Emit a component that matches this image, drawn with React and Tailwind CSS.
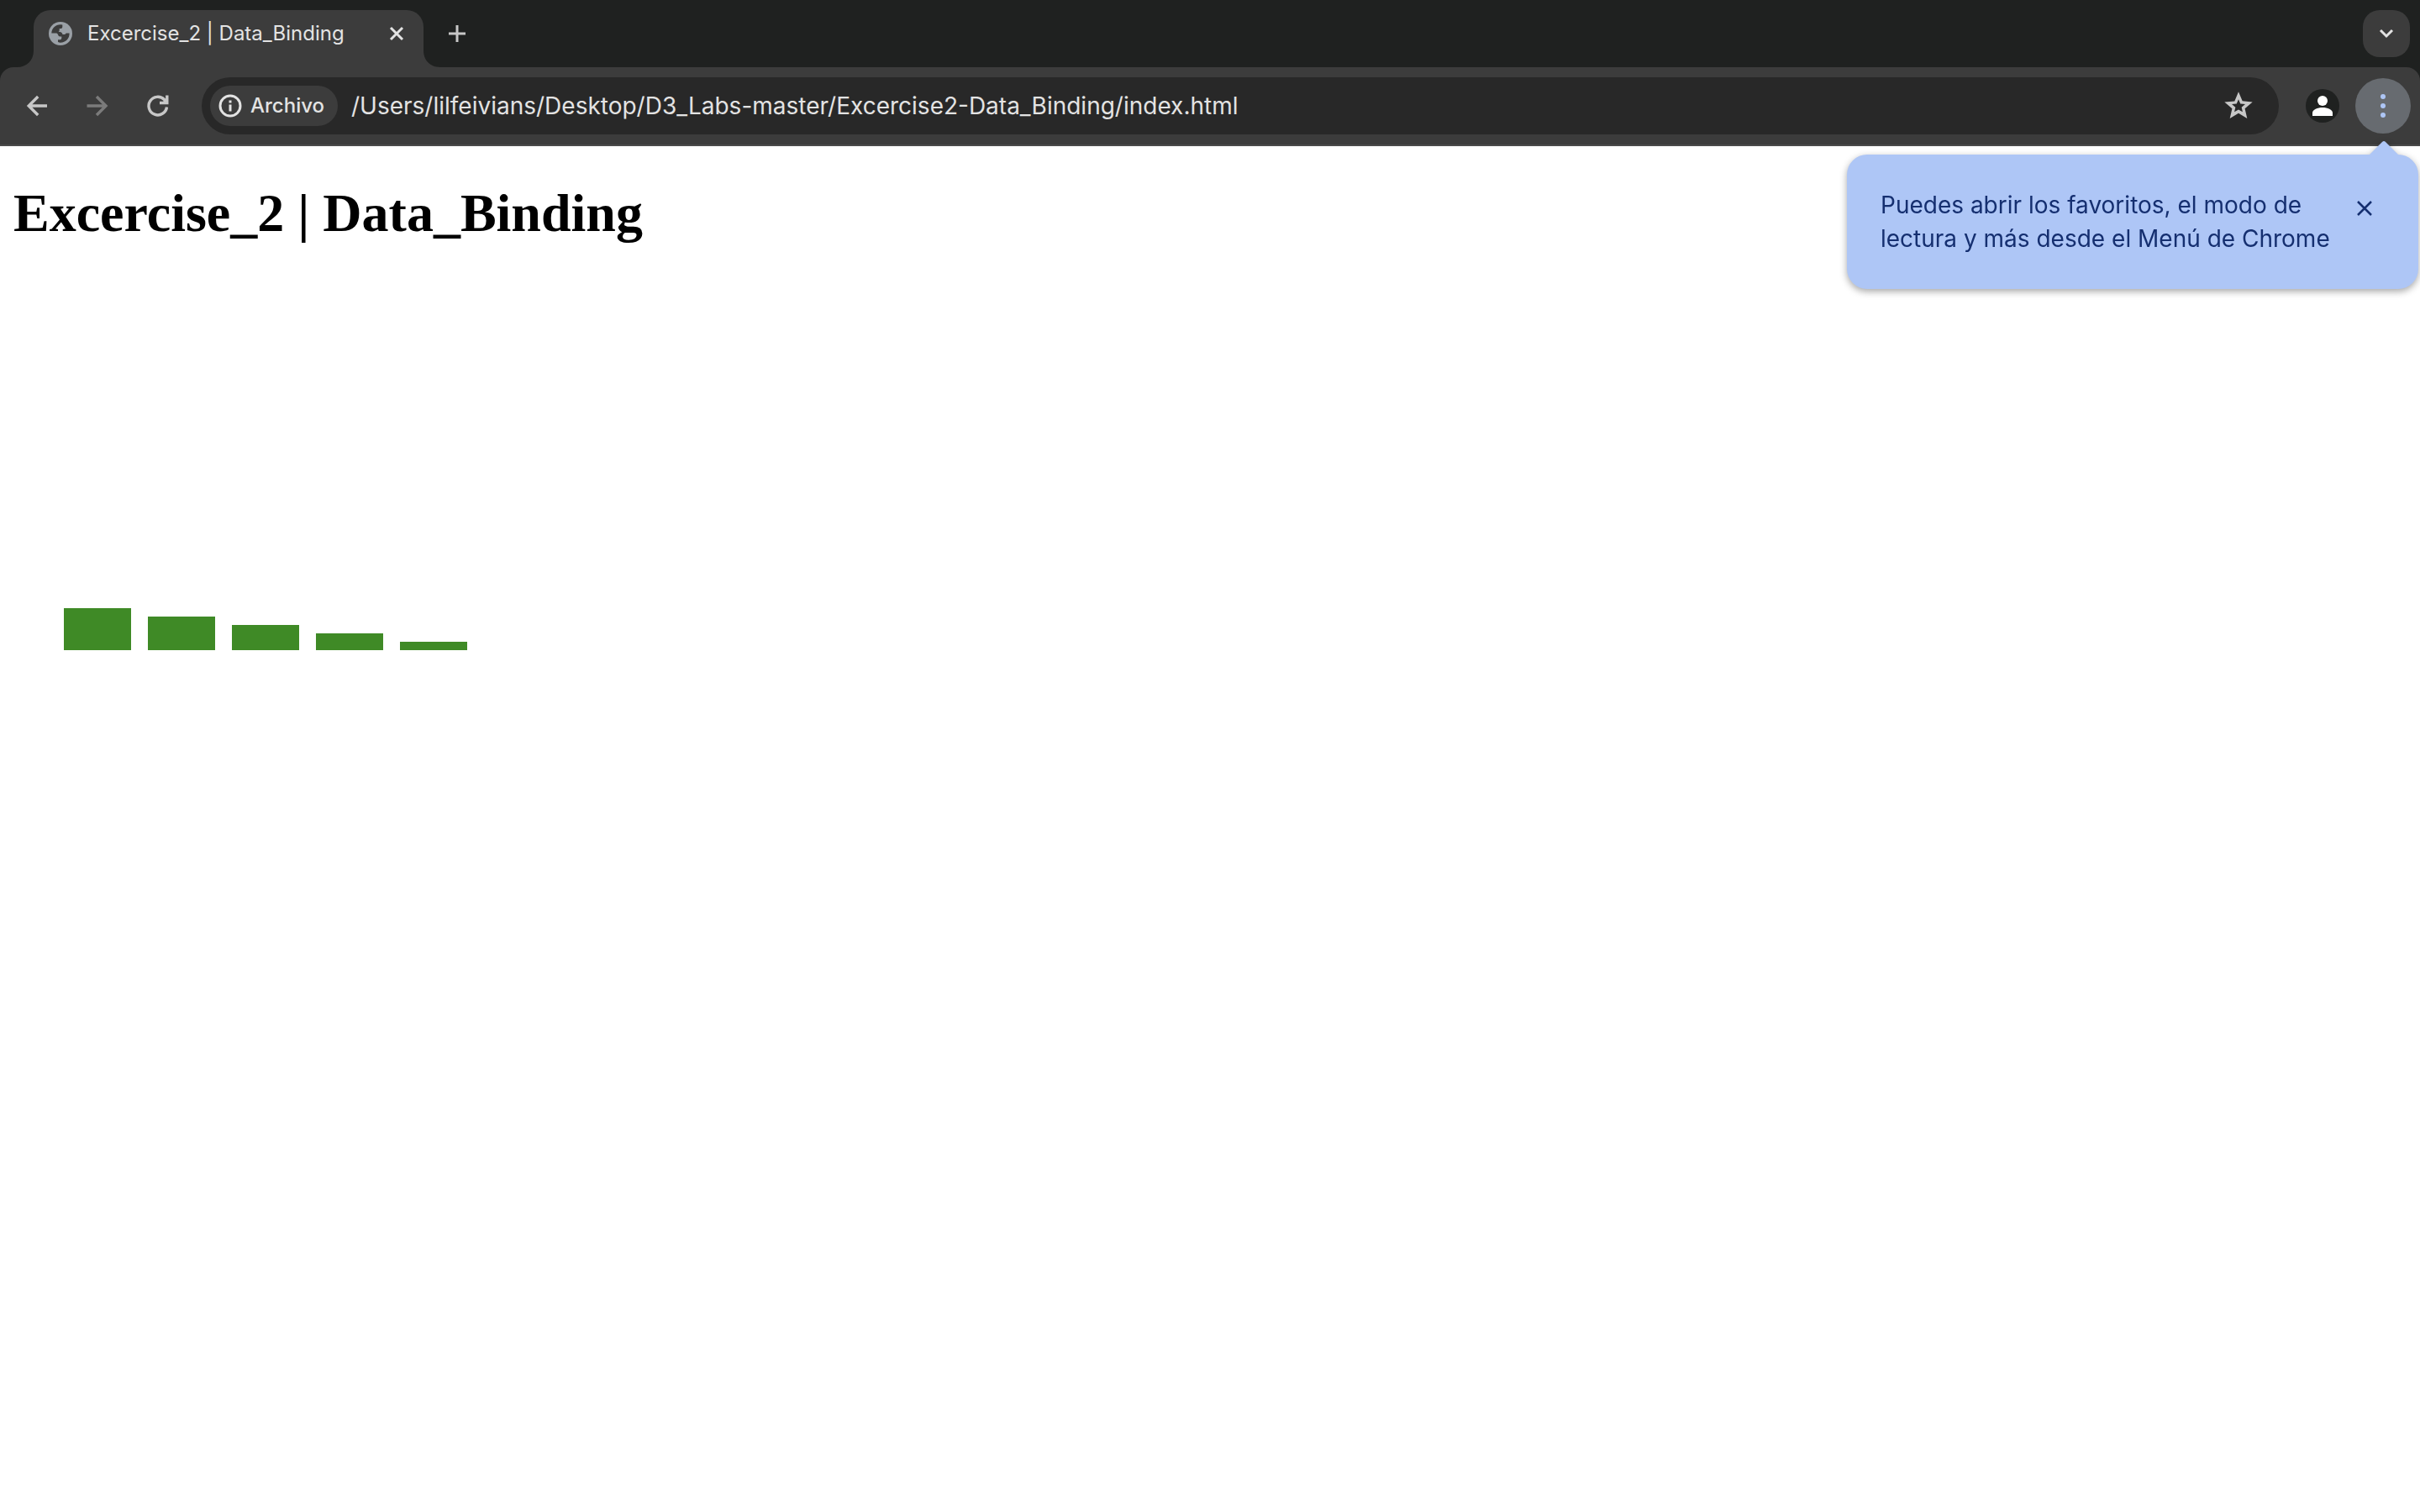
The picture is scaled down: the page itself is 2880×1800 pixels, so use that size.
function TabStrip() {
  return (
    <header className="flex h-20 items-start justify-between bg-[#1f2120]">
      <div className="flex">
        <svg viewBox="0 0 20 20" className="mt-15 ml-5 h-5 w-5 shrink-0" aria-hidden="true">
          <path d="M20 0v20H0C12 20 20 12 20 0z" fill="#3c3c3c" />
        </svg>
        <div className="mt-3 flex h-17 w-[464px] items-center rounded-t-[20px] bg-[#3c3c3c] pr-5 pb-3 pl-4">
          <svg viewBox="0 0 32 32" className="h-8 w-8 shrink-0" aria-hidden="true">
            <circle cx="16" cy="16" r="14" fill="#9aa0a6" />
            <path
              d="M5.300 15.500C5.500 9.500 10 5.300 16 5.200l2.300.3v2.200c0 1.500-.9 2.300-2.300 2.300h-1.300v2c0 .9-.5 1.500-1.300 1.800 3 .2 4.600 1 5.100 3.200h2c1 0 1.800-.6 2.200-1.500h3.900C26.800 22 22 27 15.300 26.700l-2.300-.7v-2.700h2c1.500 0 2.300-.9 2.300-2.300v-1.500h-1.800c-1.500 0-2.200-1-2.500-2.200-.3-1.200-1.200-1.800-2.500-1.800z"
              fill="#3c3c3c"
            />
          </svg>
          <span className="ml-4 flex-1 text-[24px] leading-8 whitespace-nowrap text-[#e3e3e3]">
            Excercise_2 | Data_Binding
          </span>
          <button type="button" aria-label="Cerrar pestaña" className="flex h-6 w-6 items-center justify-center">
            <svg viewBox="0 0 24 24" className="h-6 w-6" fill="none" stroke="#e3e3e3" strokeWidth="3">
              <path d="M5 5l14 14M19 5L5 19" />
            </svg>
          </button>
        </div>
        <svg viewBox="0 0 20 20" className="mt-15 h-5 w-5 shrink-0" aria-hidden="true">
          <path d="M0 0v20h20C8 20 0 12 0 0z" fill="#3c3c3c" />
        </svg>
        <button type="button" aria-label="Pestaña nueva" className="mt-7 ml-2 flex h-6 w-6 items-center justify-center">
          <svg viewBox="0 0 24 24" className="h-6 w-6" fill="none" stroke="#c7c7c7" strokeWidth="3">
            <path d="M12 2v20M2 12h20" />
          </svg>
        </button>
      </div>
      <button
        type="button"
        aria-label="Buscar pestañas"
        className="mt-3 mr-3 flex h-14 w-14 items-center justify-center rounded-[20px] bg-[#3c3c3c]"
      >
        <svg viewBox="0 0 24 24" className="h-6 w-6" fill="none" stroke="#e3e3e3" strokeWidth="3">
          <path d="M5 8l7 7 7-7" />
        </svg>
      </button>
    </header>
  );
}

function NavButton({ label, color, children }) {
  return (
    <button type="button" aria-label={label} className="flex h-8 w-8 items-center justify-center">
      <svg viewBox="0 0 32 32" className="h-8 w-8" fill="none" stroke={color} strokeWidth="3.400">
        {children}
      </svg>
    </button>
  );
}

const star = "M12 2l2.810 6.620 7.190.62-5.450 4.730L18.180 21 12 17.270 5.820 21l1.640-7.030L2 9.240l7.190-.61z";

function Toolbar() {
  return (
    <div className="bg-[#1f2120]">
      <nav className="flex h-[94px] items-center rounded-t-[16px] border-b-2 border-[#4a4a4a] bg-[#3c3c3c] pr-[11px] pl-7">
        <div className="flex gap-10">
          <NavButton label="Atrás" color="#c7c7c7">
            <path d="M28 16H6.500M17.200 5L6.200 16l11 11" />
          </NavButton>
          <NavButton label="Adelante" color="#7b7b7b">
            <path d="M3.500 16h22M15 5l11 11-11 11" />
          </NavButton>
          <NavButton label="Volver a cargar" color="#c7c7c7">
            <path d="M26.500 17.500A10.800 10.800 0 1 1 23.500 8.500l2.500 2.500M26.800 3.500v9.800M28.500 12.500H18" />
            <path d="M21.500 11.500L26.500 6.500V12z" fill="#c7c7c7" stroke="none" />
          </NavButton>
        </div>
        <div className="ml-9 flex h-17 flex-1 items-center rounded-full bg-[#282828] pr-7 pl-[10px]">
          <button type="button" className="flex h-12 items-center rounded-full bg-[#3c3c3c] pr-4 pl-[10px]">
            <svg viewBox="0 0 28 28" className="h-7 w-7" fill="none" stroke="#e3e3e3" strokeWidth="3" aria-hidden="true">
              <circle cx="14" cy="14" r="12" />
              <path d="M14 12.500v8M14 7.500v3" />
            </svg>
            <span className="ml-[10px] text-[24px] leading-8 font-medium text-[#e3e3e3]">Archivo</span>
          </button>
          <input
            type="text"
            aria-label="Barra de direcciones"
            defaultValue="/Users/lilfeivians/Desktop/D3_Labs-master/Excercise2-Data_Binding/index.html"
            className="ml-4 min-w-0 flex-1 bg-transparent text-[28px] leading-9 text-[#e3e3e3] outline-none"
          />
          <button type="button" aria-label="Añadir a favoritos">
            <svg viewBox="0 0 24 24" className="h-10 w-10">
              <path d={star} fill="#c7c7c7" />
              <path d={star} fill="#282828" transform="translate(12 12.200) scale(.48) translate(-12 -12.200)" />
            </svg>
          </button>
        </div>
        <button type="button" aria-label="Perfil" className="ml-8 h-10 w-10 rounded-full bg-[#1f2120]">
          <svg viewBox="0 0 40 40" className="h-10 w-10" fill="#fff">
            <circle cx="20" cy="14" r="6" />
            <path d="M8 32v-3.500c0-4 6-6.500 12-6.500s12 2.500 12 6.500V32z" />
          </svg>
        </button>
        <button
          type="button"
          aria-label="Menú de Chrome"
          className="ml-[19px] flex h-[66px] w-[66px] items-center justify-center rounded-full bg-[#676b70]"
        >
          <svg viewBox="0 0 32 32" className="h-8 w-8" fill="#aec6f6">
            <circle cx="16" cy="5" r="3" />
            <circle cx="16" cy="16" r="3" />
            <circle cx="16" cy="27" r="3" />
          </svg>
        </button>
      </nav>
    </div>
  );
}

function MenuTip() {
  return (
    <aside className="absolute top-[168px] right-[2px] w-[680px] drop-shadow-[0_3px_4px_rgba(0,0,0,0.35)]">
      <svg viewBox="0 0 34 16" className="mr-6 ml-auto block h-4 w-[34px]" aria-hidden="true">
        <path d="M0 16L15 1q2-2 4 0l15 15z" fill="#aec6f6" />
      </svg>
      <div className="flex items-start justify-between rounded-[24px] bg-[#aec6f6] pt-10 pr-[52px] pb-10 pl-10">
        <p className="text-[28px] leading-10 whitespace-nowrap text-[#152f70]">
          Puedes abrir los favoritos, el modo de
          <br />
          lectura y más desde el Menú de Chrome
        </p>
        <button type="button" aria-label="Cerrar" className="mt-3 h-6 w-6">
          <svg viewBox="0 0 24 24" className="h-6 w-6" fill="none" stroke="#152f70" strokeWidth="2.500">
            <path d="M4 4l16 16M20 4L4 20" />
          </svg>
        </button>
      </div>
    </aside>
  );
}

const data = [50, 40, 30, 20, 10];

function BarChart() {
  return (
    <svg width="1000" height="600" className="block" role="img" aria-label="Gráfico de barras">
      {data.map((d, i) => (
        <rect key={i} x={60 + i * 100} y={400 - d} width="80" height={d} fill="#3f8a26" />
      ))}
    </svg>
  );
}

export default function App() {
  return (
    <div className="relative min-h-screen bg-white font-['Inter',sans-serif]">
      <TabStrip />
      <Toolbar />
      <MenuTip />
      <main className="px-4 pt-11">
        <h1 className="font-['Liberation_Serif',serif] text-[64px] leading-[72px] font-bold text-black">
          Excercise_2 | Data_Binding
        </h1>
        <div className="pt-[84px]">
          <BarChart />
        </div>
      </main>
    </div>
  );
}
